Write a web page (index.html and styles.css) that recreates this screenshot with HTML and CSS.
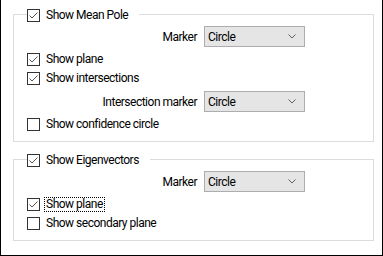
FILE: index.html
```html
<!DOCTYPE html>
<html lang="en">
<head>
  <meta charset="UTF-8" />
  <title>Pole options</title>
  <link rel="stylesheet" href="styles.css">
</head>
<body>
  <div class="panel">
    <div class="group">
      <div class="group-head">
        <span class="box"><svg width="11" height="11" viewBox="0 0 11 11"><path d="M1.5 5.5 L4 8 L9.5 2.5" /></svg></span>
        <span class="text">Show Mean Pole</span>
      </div>
      <div class="field-row">
        <span class="field-label">Marker</span>
        <div class="combo"><span>Circle</span><svg width="8" height="5" viewBox="0 0 8 5"><path d="M0.5 0.5 L4 4 L7.5 0.5" /></svg></div>
      </div>
      <div class="check-row">
        <span class="box"><svg width="11" height="11" viewBox="0 0 11 11"><path d="M1.5 5.5 L4 8 L9.5 2.5" /></svg></span>
        <span class="text">Show plane</span>
      </div>
      <div class="check-row">
        <span class="box"><svg width="11" height="11" viewBox="0 0 11 11"><path d="M1.5 5.5 L4 8 L9.5 2.5" /></svg></span>
        <span class="text">Show intersections</span>
      </div>
      <div class="field-row">
        <span class="field-label">Intersection marker</span>
        <div class="combo"><span>Circle</span><svg width="8" height="5" viewBox="0 0 8 5"><path d="M0.5 0.5 L4 4 L7.5 0.5" /></svg></div>
      </div>
      <div class="check-row">
        <span class="box"></span>
        <span class="text">Show confidence circle</span>
      </div>
    </div>

    <div class="group">
      <div class="group-head">
        <span class="box"><svg width="11" height="11" viewBox="0 0 11 11"><path d="M1.5 5.5 L4 8 L9.5 2.5" /></svg></span>
        <span class="text">Show Eigenvectors</span>
      </div>
      <div class="field-row">
        <span class="field-label">Marker</span>
        <div class="combo"><span>Circle</span><svg width="8" height="5" viewBox="0 0 8 5"><path d="M0.5 0.5 L4 4 L7.5 0.5" /></svg></div>
      </div>
      <div class="check-row">
        <span class="box"><svg width="11" height="11" viewBox="0 0 11 11"><path d="M1.5 5.5 L4 8 L9.5 2.5" /></svg></span>
        <span class="text focused">Show plane</span>
      </div>
      <div class="check-row">
        <span class="box"></span>
        <span class="text">Show secondary plane</span>
      </div>
    </div>
  </div>
</body>
</html>
```

FILE: styles.css
```css
body {
  margin: 0;
  font-family: Roboto, "Noto Sans", sans-serif;
  font-size: 12px;
  letter-spacing: -0.5px;
  color: #000;
  background-color: #fff;
}

.panel {
  width: 383px;
  height: 256px;
  box-sizing: border-box;
  border: 1px solid #000;
  border-top: none;
  padding: 14px 8px 14px 12px;
  display: flex;
  flex-direction: column;
  gap: 17px;
}

.group {
  border: 1px solid #dcdcdc;
  display: flex;
  flex-direction: column;
  gap: 6px;
  padding-bottom: 10px;
}

.group-head,
.check-row {
  display: flex;
  align-items: center;
  height: 13px;
  line-height: 13px;
  white-space: nowrap;
}

.group-head {
  align-self: flex-start;
  margin: -6px 0 -2px 13px;
  padding-right: 10px;
  background-color: #fff;
}

.check-row {
  padding-left: 13px;
}

.box {
  width: 11px;
  height: 11px;
  border: 1px solid #333;
  background-color: #fff;
  margin-right: 5px;
  flex-shrink: 0;
}

.box svg {
  display: block;
}

.box path {
  fill: none;
  stroke: #555;
  stroke-width: 1;
}

.text {
  padding: 0 1px;
}

.focused {
  outline: 1px dotted #000;
  outline-offset: 0;
}

.field-row {
  display: flex;
  align-items: center;
  gap: 7px;
}

.field-label {
  width: 183px;
  text-align: right;
  white-space: nowrap;
}

.combo {
  width: 101px;
  height: 21px;
  box-sizing: border-box;
  border: 1px solid #adadad;
  background-color: #e5e5e5;
  display: flex;
  align-items: center;
  justify-content: space-between;
  padding: 0 8px 0 3px;
}

.combo path {
  fill: none;
  stroke: #606060;
  stroke-width: 1;
}
```
